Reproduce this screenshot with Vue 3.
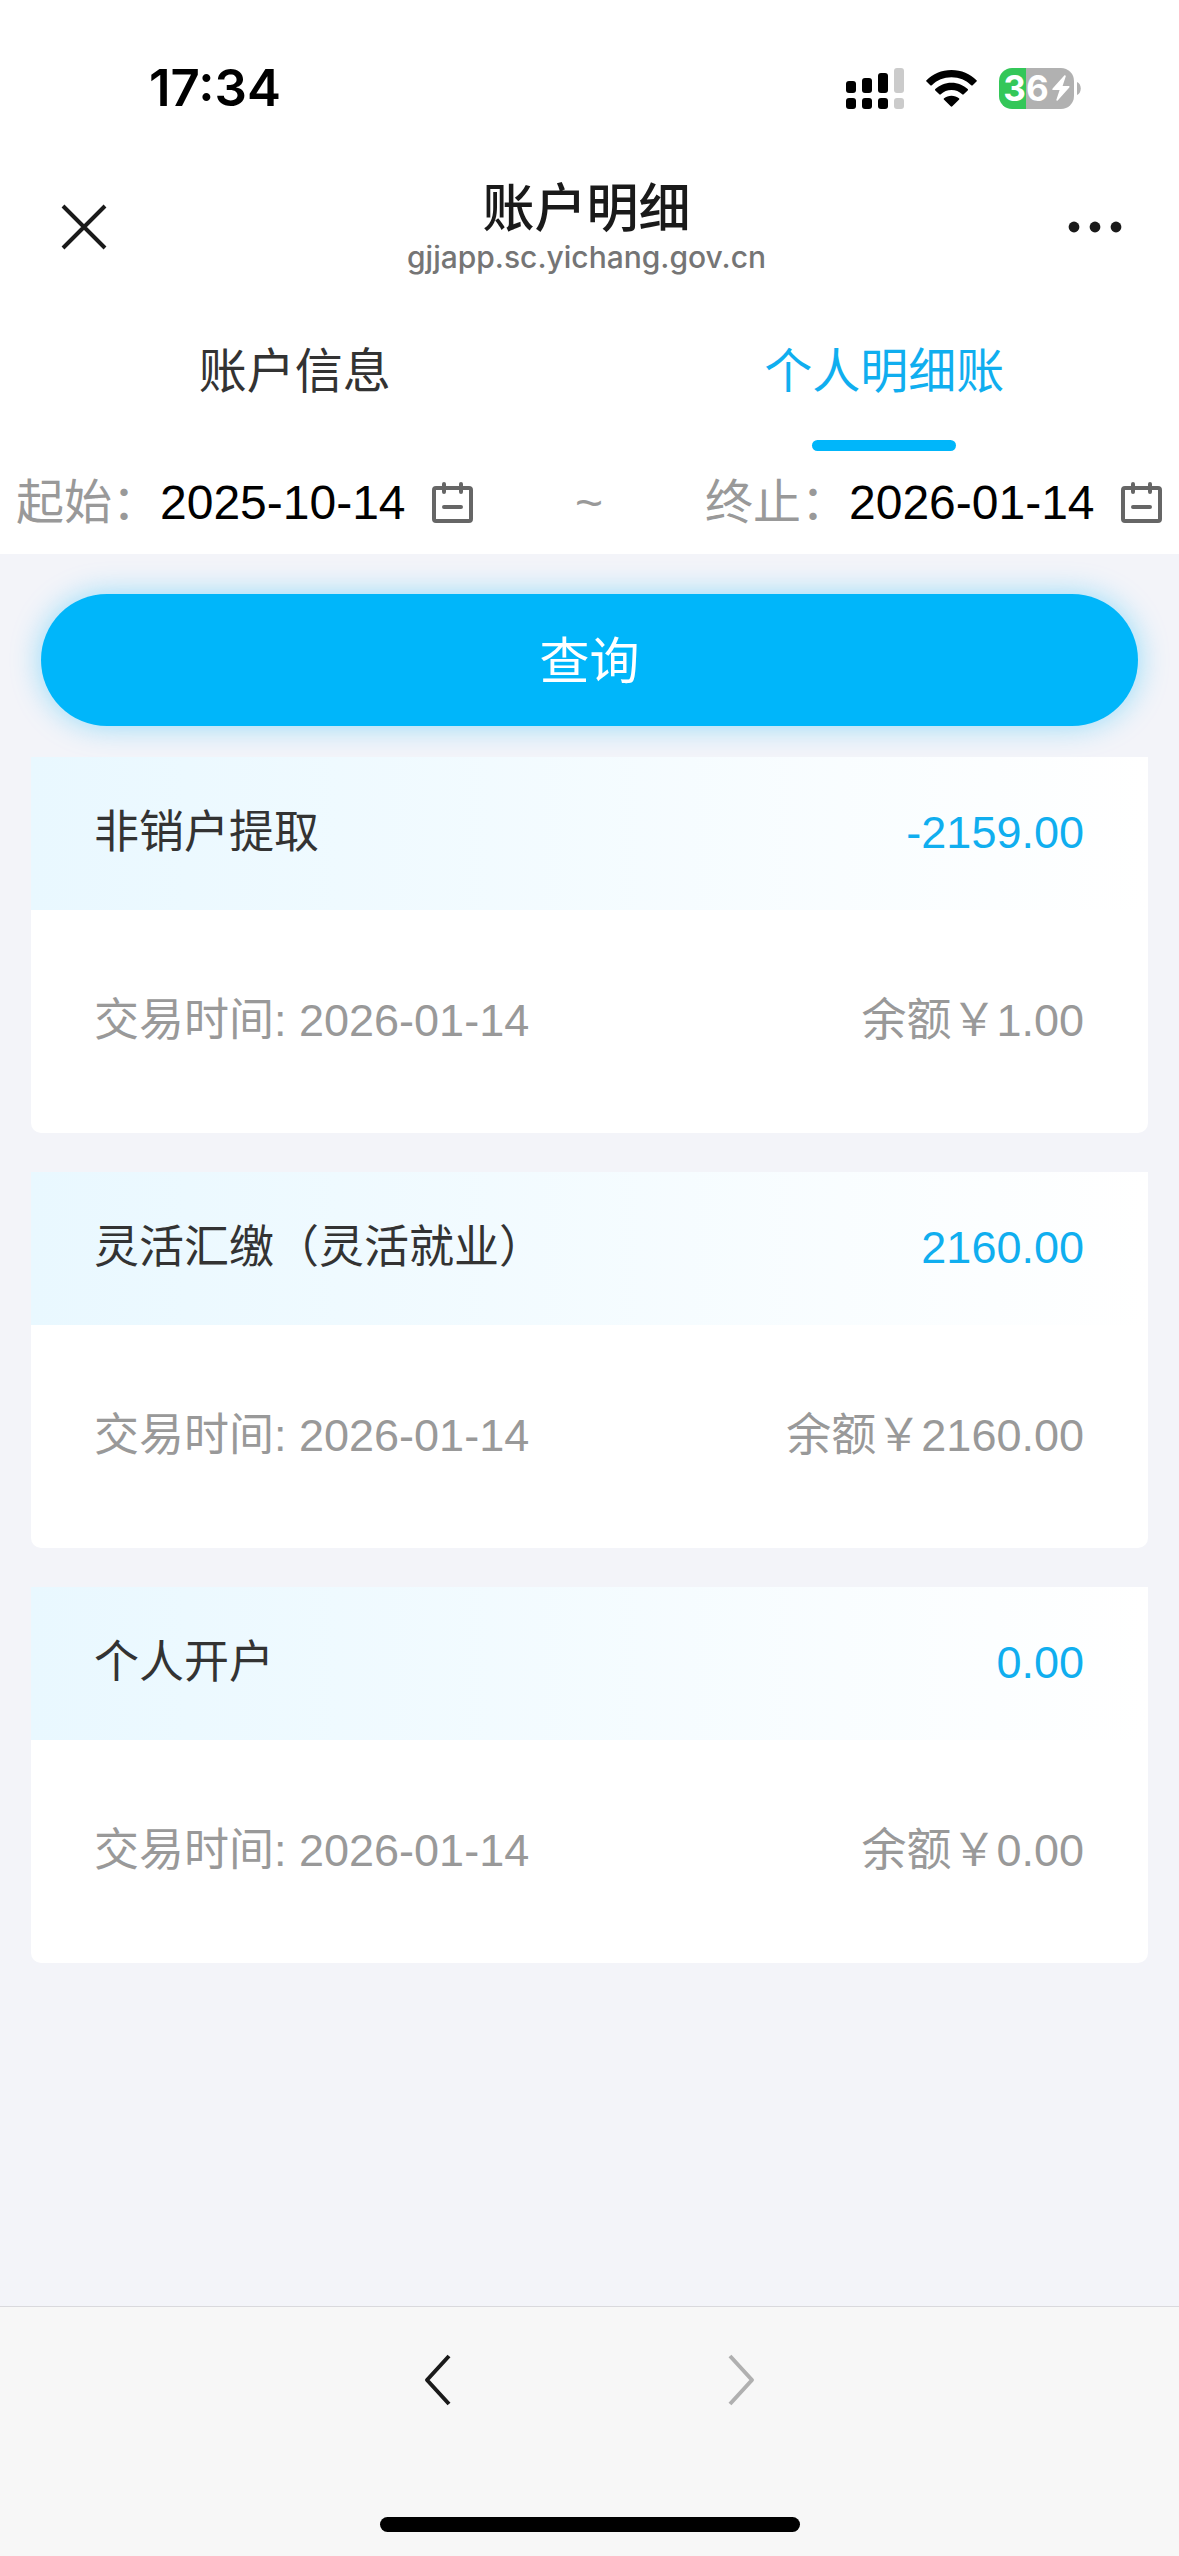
<script setup>
import { ref } from 'vue'

const tabs = ['账户信息', '个人明细账']
const activeTab = ref(1)
const startDate = ref('2025-10-14')
const endDate = ref('2026-01-14')

const records = [
  { title: '非销户提取', amount: '-2159.00', date: '2026-01-14', balance: '1.00' },
  { title: '灵活汇缴（灵活就业）', amount: '2160.00', date: '2026-01-14', balance: '2160.00' },
  { title: '个人开户', amount: '0.00', date: '2026-01-14', balance: '0.00' }
]
</script>

<template>
  <div class="page">
    <header class="top">
      <div class="status">
        <time class="clock">17:34</time>
        <div class="status-icons">
          <svg class="signal" width="58" height="41" viewBox="0 0 58 41" aria-hidden="true">
            <rect x="0" y="13" width="10" height="12" rx="3" />
            <rect x="16" y="10" width="10" height="15" rx="3" />
            <rect x="32" y="5" width="10" height="20" rx="3" />
            <rect x="0" y="30" width="10" height="11" rx="3" />
            <rect x="16" y="30" width="10" height="11" rx="3" />
            <rect x="32" y="30" width="10" height="11" rx="3" />
            <g fill="#cbcbcb">
              <rect x="48" y="0" width="10" height="25" rx="3" />
              <rect x="48" y="30" width="10" height="11" rx="3" />
            </g>
          </svg>
          <svg class="wifi" width="51" height="37" viewBox="0 0 51 37" aria-hidden="true">
            <path d="M25.500 0C35.500 0 44.200 3.900 50.500 10.200Q51.200 10.900 50.500 11.600L46.700 15.200Q46 15.900 45.200 15.200C40 10.200 33.200 7.300 25.500 7.300S11 10.200 5.800 15.200Q5 15.900 4.300 15.200L.5 11.600Q-.2 10.900.5 10.200C6.800 3.900 15.500 0 25.500 0Z" />
            <path d="M25.500 12.800C32 12.800 37.500 15.300 41.700 19.100Q42.500 19.800 41.700 20.600L37.700 24.300Q37 25 36.200 24.300C33.300 21.600 29.600 20.100 25.500 20.100S17.700 21.600 14.800 24.300Q14 25 13.300 24.300L9.300 20.600Q8.500 19.800 9.300 19.100C13.500 15.300 19 12.800 25.500 12.800Z" />
            <path d="M25.500 25.700C28.300 25.700 31 26.700 32.900 28.300Q33.700 29 32.900 29.800L26.300 36.300Q25.500 37.100 24.700 36.300L18.100 29.800Q17.300 29 18.100 28.300C20 26.700 22.700 25.700 25.500 25.700Z" />
          </svg>
          <div class="battery">
            <span class="battery-body">
              <span class="battery-text">36</span>
              <svg width="18" height="26" viewBox="0 0 18 26" aria-hidden="true">
                <path d="M12.500.3L.6 13.600Q-.2 14.900 1.200 15H7.600L4.300 25Q4.600 26.200 5.700 25.500L17.300 12.400Q18.100 11.100 16.700 11H10.600L13.800 1.200Q13.600-.1 12.500.3Z" fill="#fff" />
              </svg>
            </span>
            <svg width="4" height="13" viewBox="0 0 4 13" aria-hidden="true">
              <path d="M0 0C5 2 5 11 0 13Z" fill="#b1b1b1" />
            </svg>
          </div>
        </div>
      </div>

      <div class="nav">
        <button class="icon-button" type="button" aria-label="关闭">
          <svg width="46" height="46" viewBox="0 0 46 46" aria-hidden="true">
            <path d="M2 2L44 44M44 2L2 44" fill="none" stroke="#1a1a1a" stroke-width="4" />
          </svg>
        </button>
        <div class="heading">
          <h1>账户明细</h1>
          <p>gjjapp.sc.yichang.gov.cn</p>
        </div>
        <button class="icon-button end" type="button" aria-label="更多">
          <svg width="54" height="12" viewBox="0 0 54 12" aria-hidden="true">
            <g fill="#1a1a1a">
              <circle cx="6" cy="6" r="5.400" />
              <circle cx="27" cy="6" r="5.400" />
              <circle cx="48" cy="6" r="5.400" />
            </g>
          </svg>
        </button>
      </div>

      <div class="tabs" role="tablist">
        <button
          v-for="(tab, i) in tabs"
          :key="tab"
          type="button"
          role="tab"
          class="tab"
          :class="{ active: i === activeTab }"
          :aria-selected="i === activeTab"
          @click="activeTab = i"
        >{{ tab }}</button>
      </div>

      <div class="range">
        <div class="field">
          <label for="start">起始：</label>
          <input id="start" v-model="startDate" type="text" readonly />
          <svg width="41" height="42" viewBox="0 0 41 42" aria-hidden="true">
            <g fill="none" stroke="#666" stroke-width="4" stroke-linecap="round">
              <rect x="2" y="6" width="37" height="33" rx="2" />
              <path d="M12 2V10M29 2V10M12 25H29" />
            </g>
          </svg>
        </div>
        <span class="tilde">~</span>
        <div class="field">
          <label for="end">终止：</label>
          <input id="end" v-model="endDate" type="text" readonly />
          <svg width="41" height="42" viewBox="0 0 41 42" aria-hidden="true">
            <g fill="none" stroke="#666" stroke-width="4" stroke-linecap="round">
              <rect x="2" y="6" width="37" height="33" rx="2" />
              <path d="M12 2V10M29 2V10M12 25H29" />
            </g>
          </svg>
        </div>
      </div>
    </header>

    <main class="content">
      <button class="query" type="button">查询</button>
      <ul class="records">
        <li v-for="r in records" :key="r.title" class="card">
          <div class="card-head">
            <span>{{ r.title }}</span>
            <span class="amount">{{ r.amount }}</span>
          </div>
          <div class="card-body">
            <span>交易时间: {{ r.date }}</span>
            <span>余额￥{{ r.balance }}</span>
          </div>
        </li>
      </ul>
    </main>

    <footer class="bottom">
      <div class="history">
        <button type="button" aria-label="后退">
          <svg width="28" height="52" viewBox="0 0 28 52" aria-hidden="true">
            <path d="M25 2L3 26L25 50" fill="none" stroke="#1a1a1a" stroke-width="4" stroke-linejoin="round" />
          </svg>
        </button>
        <button type="button" aria-label="前进" disabled>
          <svg width="28" height="52" viewBox="0 0 28 52" aria-hidden="true">
            <path d="M2 2L24 26L2 50" fill="none" stroke="#b0b0b0" stroke-width="4" stroke-linejoin="round" />
          </svg>
        </button>
      </div>
      <div class="home-bar"></div>
    </footer>
  </div>
</template>

<style>
body {
  margin: 0;
  background: #f3f4f9;
}
</style>

<style scoped>
.page {
  display: flex;
  flex-direction: column;
  min-height: 100vh;
  background: #f3f4f9;
  color: #333;
  font-family: "Liberation Sans", "Noto Sans CJK SC", sans-serif;
}

button {
  margin: 0;
  padding: 0;
  border: 0;
  background: none;
  font-family: inherit;
}

svg {
  display: block;
  flex: none;
}

.top {
  background: #fff;
}

.status {
  display: flex;
  align-items: center;
  justify-content: space-between;
  height: 176px;
  padding: 0 98px 0 149px;
}

.clock {
  color: #000;
  font: 600 51px/60px Inter, sans-serif;
}

.status-icons {
  display: flex;
  align-items: center;
  gap: 22px;
}

.battery {
  display: flex;
  align-items: center;
  gap: 3px;
}

.battery-body {
  display: flex;
  align-items: center;
  justify-content: center;
  gap: 3px;
  width: 75px;
  height: 41px;
  border-radius: 13px;
  background: linear-gradient(90deg, #34c759 36%, #b1b1b1 36%);
}

.battery-text {
  color: #fff;
  font: 700 35px/41px Inter, sans-serif;
}

.nav {
  display: flex;
  align-items: center;
  justify-content: space-between;
  height: 102px;
  padding: 0 57px 0 61px;
}

.icon-button {
  display: flex;
  width: 60px;
}

.icon-button.end {
  justify-content: flex-end;
  width: 70px;
}

.heading {
  text-align: center;
}

h1 {
  margin: 0;
  color: #1a1a1a;
  font-size: 52px;
  font-weight: 500;
  line-height: 60px;
}

.heading p {
  margin: 0;
  color: #757575;
  font: 500 30px/36px Inter, sans-serif;
}

.tabs {
  display: flex;
}

.tab {
  display: flex;
  flex: 1;
  flex-direction: column;
  align-items: center;
  gap: 38px;
  padding-top: 64px;
  color: #333;
  font-size: 48px;
  line-height: 60px;
}

.tab::after {
  width: 144px;
  height: 11px;
  border-radius: 6px;
  content: "";
}

.tab.active {
  color: #10aeef;
}

.tab.active::after {
  background: #00b6fa;
}

.range {
  display: flex;
  align-items: center;
  justify-content: space-between;
  height: 103px;
  padding: 0 17px 0 16px;
  color: #999;
  font-size: 48px;
  line-height: 60px;
}

.field {
  display: flex;
  align-items: center;
}

.field input {
  width: 246px;
  height: 60px;
  margin-right: 26px;
  padding: 0;
  border: 0;
  outline: 0;
  background: none;
  color: #000;
  font: inherit;
}

.content {
  padding: 40px 31px;
}

.query {
  display: block;
  width: calc(100% - 20px);
  height: 132px;
  margin: 0 10px 31px;
  padding-bottom: 6px;
  border-radius: 66px;
  background: #00b6fa;
  box-shadow: 0 0 30px rgba(0, 182, 250, 0.4);
  color: #fff;
  font-size: 50px;
}

.records {
  display: flex;
  flex-direction: column;
  gap: 39px;
  margin: 0;
  padding: 0;
  list-style: none;
}

.card {
  position: relative;
  border-radius: 0 0 10px 10px;
  background: #fff;
  font-size: 45px;
  line-height: 60px;
}

.card-head,
.card-body {
  display: flex;
  align-items: center;
  justify-content: space-between;
  box-sizing: border-box;
  padding: 0 64px 2px 63px;
}

.card-head {
  height: 153px;
  background: linear-gradient(90deg, #e9f8ff, #fff);
}

.card-body {
  height: 223px;
  color: #999;
}

.amount {
  color: #10aeef;
}

.bottom {
  display: flex;
  flex-direction: column;
  align-items: center;
  justify-content: space-between;
  height: 250px;
  box-sizing: border-box;
  margin-top: auto;
  padding: 47px 0 24px;
  border-top: 1px solid #d9d9dd;
  background: #f7f7f7;
}

.history {
  display: flex;
  gap: 276px;
}

.home-bar {
  width: 420px;
  height: 15px;
  border-radius: 8px;
  background: #000;
}
</style>
